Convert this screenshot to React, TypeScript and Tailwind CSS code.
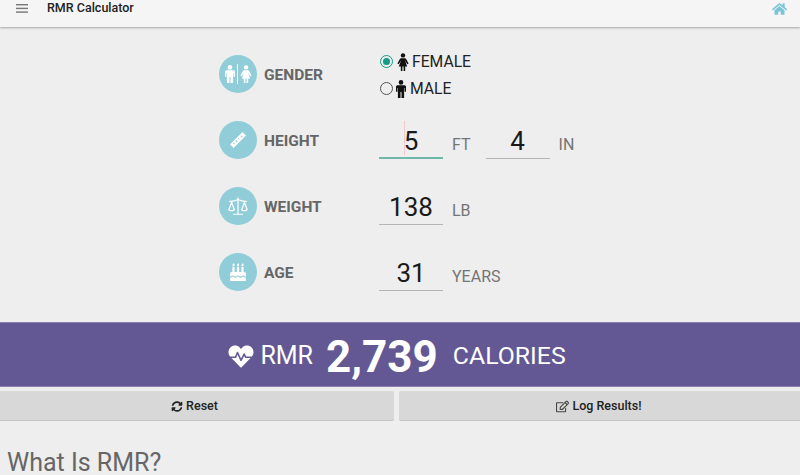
import React from "react";
import { FaHome, FaBirthdayCake, FaHeartbeat, FaSyncAlt, FaRegEdit } from "react-icons/fa";
import { Scale } from "lucide-react";

function Female({ className }: { className?: string }) {
  return (
    <svg viewBox="0 0 14 18" className={className} fill="currentColor">
      <circle cx="7" cy="2.4" r="2.2" />
      <path d="M5 5.2h4c.5 0 .8.2 1 .6l2.6 4.6-1.3.8L9 7.6l2.2 6H9.2V18H7.6v-4.4h-1.2V18H4.8v-4.4H2.8l2.2-6-2.3 3.6-1.3-.8L4 5.8c.2-.4.5-.6 1-.6z" />
    </svg>
  );
}

function Male({ className }: { className?: string }) {
  return (
    <svg viewBox="0 0 12 18" className={className} fill="currentColor">
      <circle cx="6" cy="2.4" r="2.3" />
      <path d="M2.6 5.2h6.8c.9 0 1.6.7 1.6 1.6v5H9.6V8h-.5v10H6.5v-6h-1v6H2.9V8h-.5v3.8H1v-5c0-.9.7-1.6 1.6-1.6z" />
    </svg>
  );
}

function Ruler() {
  return (
    <svg viewBox="0 0 20 20" className="h-[20px] w-[20px]" fill="currentColor">
      <path d="M2 14.5 14.5 2 18 5.5 5.5 18zM5 13.2l1.2 1.2.7-.7-1.2-1.2zM7.4 10.8l1.7 1.7.7-.7-1.7-1.7zM9.8 8.4l1.2 1.2.7-.7-1.2-1.2zM12.2 6l1.7 1.7.7-.7-1.7-1.7z" fillRule="evenodd" />
    </svg>
  );
}

function Circle({ children }: { children: React.ReactNode }) {
  return <div className="flex h-[38px] w-[38px] shrink-0 items-center justify-center rounded-full bg-[#90cdd8] text-white">{children}</div>;
}

function Field({ value, unit, focused }: { value: string; unit: string; focused?: boolean }) {
  return (
    <div className="flex items-end">
      <div className={`relative flex h-[38px] w-[64px] items-center justify-center pt-[3px] text-[26px] leading-none text-[#1a1a1a] ${focused ? "border-b-2 border-[#6fb8aa]" : "border-b border-[#b5b5b5]"}`}>
        {focused && <span className="absolute left-[25px] top-0 h-[34px] w-px bg-[#f3c9cd]" />}
        {value}
      </div>
      <span className="ml-[9px] pb-[4px] text-[16px] leading-[20px] text-[#757575]">{unit}</span>
    </div>
  );
}

function Row({ icon, label, children }: { icon: React.ReactNode; label: string; children: React.ReactNode }) {
  return (
    <div className="flex h-[66px] items-center pl-[219px]">
      <Circle>{icon}</Circle>
      <span className="ml-[7px] w-[115px] pt-[3px] text-[15.5px] font-bold text-[#666666]">{label}</span>
      {children}
    </div>
  );
}

export default function App() {
  return (
    <div className="h-[475px] overflow-hidden bg-[#eeeeee] font-['Roboto',sans-serif]">
      <header className="flex h-[27px] items-center justify-between bg-[#f5f5f5] pb-[12px] pt-[2px] pl-[16px] pr-[13px] shadow-[0_1px_2px_rgba(0,0,0,0.3)]">
        <div className="flex items-center">
          <svg viewBox="0 0 12 9" className="h-[9px] w-[12px] text-[#777777]" fill="currentColor">
            <rect y="0" width="12" height="1.4" />
            <rect y="3.7" width="12" height="1.4" />
            <rect y="7.4" width="12" height="1.4" />
          </svg>
          <span className="ml-[19px] text-[12.5px] font-medium text-[#222222]">RMR Calculator</span>
        </div>
        <FaHome className="h-[14px] w-[15px] text-[#7cc5d8]" />
      </header>

      <main className="pt-[14px]">
        <Row
          icon={
            <div className="flex items-center gap-[1px]">
              <Male className="h-[18px] w-[12px]" />
              <span className="h-[20px] w-px bg-white" />
              <Female className="h-[18px] w-[14px]" />
            </div>
          }
          label="GENDER"
        >
          <div className="mt-[3px] flex flex-col gap-[7px] text-[15.7px] text-[#222222]">
            <label className="flex h-[20px] items-center pl-[1px]">
              <span className="mb-[2px] flex h-[13px] w-[13px] items-center justify-center rounded-full border border-[#159a86]"><span className="h-[7px] w-[7px] rounded-full bg-[#159a86]" /></span>
              <Female className="ml-[3px] h-[18px] w-[14px] text-[#111111]" />
              <span className="ml-[2px]">FEMALE</span>
            </label>
            <label className="flex h-[20px] items-center pl-[1px]">
              <span className="mb-[2px] h-[13px] w-[13px] rounded-full border border-[#555555]" />
              <Male className="ml-[2px] h-[18px] w-[12px] text-[#111111]" />
              <span className="ml-[3px]">MALE</span>
            </label>
          </div>
        </Row>
        <Row icon={<Ruler />} label="HEIGHT">
          <div className="flex gap-[15px]">
            <Field value="5" unit="FT" focused />
            <Field value="4" unit="IN" />
          </div>
        </Row>
        <Row icon={<Scale className="h-[22px] w-[22px]" strokeWidth={1.3} />} label="WEIGHT">
          <Field value="138" unit="LB" />
        </Row>
        <Row icon={<FaBirthdayCake className="h-[18px] w-[18px]" />} label="AGE">
          <Field value="31" unit="YEARS" />
        </Row>
      </main>

      <section className="mt-[17px] flex h-[65px] items-center justify-center border-y border-[#8a7fae] bg-[#635894] pr-[7px] pt-[3px] text-white">
        <FaHeartbeat className="h-[25px] w-[28px]" />
        <span className="ml-[5px] text-[25px]">RMR</span>
        <span className="ml-[13px] pt-[2px] text-[44px] font-bold leading-none">2,739</span>
        <span className="ml-[15px] text-[24.8px]">CALORIES</span>
      </section>

      <div className="mt-[4px] flex gap-[5px]">
        <button className="flex h-[30px] w-[394px] items-center justify-center rounded-r-[2px] border-b border-[#c4c4c4] bg-[#d7d8d7] pr-[5px] pt-[2px] text-[12.5px] font-medium text-[#222222]">
          <FaSyncAlt className="mr-[3px] h-[11px] w-[12px]" />Reset
        </button>
        <button className="flex h-[30px] flex-1 items-center justify-center rounded-l-[2px] border-b border-[#c4c4c4] bg-[#d7d8d7] pr-[1px] pt-[2px] text-[12.5px] font-medium text-[#222222]">
          <FaRegEdit className="mr-[3px] h-[13px] w-[13px] text-[#444444]" />Log Results!
        </button>
      </div>

      <h2 className="mt-[26px] pl-[7px] text-[25px] leading-[32px] text-[#666666]">What Is RMR?</h2>
    </div>
  );
}
